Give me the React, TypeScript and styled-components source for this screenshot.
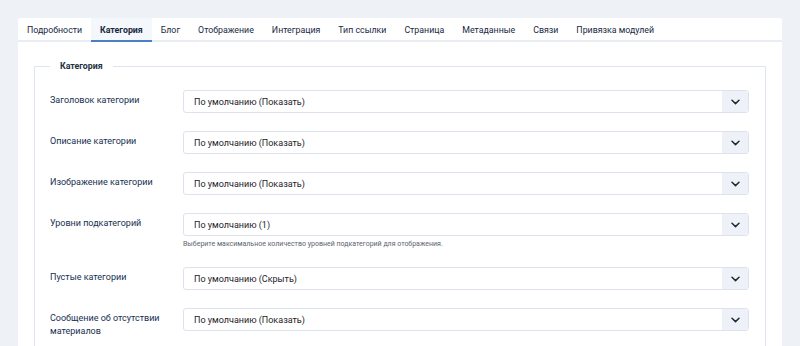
import styled, { createGlobalStyle } from "styled-components";

const GlobalStyle = createGlobalStyle`
    html, body {
        margin: 0;
        padding: 0;
        background-color: #eef2f7;
        font-family: Roboto, "Noto Sans", "Liberation Sans", sans-serif;
    }
`;

type Field = {
    label: string;
    value: string;
    hint?: string;
};

const tabs = [
    "Подробности",
    "Категория",
    "Блог",
    "Отображение",
    "Интеграция",
    "Тип ссылки",
    "Страница",
    "Метаданные",
    "Связи",
    "Привязка модулей",
];

const fields: Field[] = [
    { label: "Заголовок категории", value: "По умолчанию (Показать)" },
    { label: "Описание категории", value: "По умолчанию (Показать)" },
    { label: "Изображение категории", value: "По умолчанию (Показать)" },
    {
        label: "Уровни подкатегорий",
        value: "По умолчанию (1)",
        hint: "Выберите максимальное количество уровней подкатегорий для отображения.",
    },
    { label: "Пустые категории", value: "По умолчанию (Скрыть)" },
    { label: "Сообщение об отсутствии материалов", value: "По умолчанию (Показать)" },
];

const Chevron = () => (
    <svg width="9" height="6" viewBox="0 0 9 6" fill="none">
        <path d="M1 1.2l3.5 3.4 3.5-3.4" stroke="#1f2a37" strokeWidth="1.5" strokeLinecap="round" strokeLinejoin="round" />
    </svg>
);

export default function App() {
    return (
        <>
            <GlobalStyle />
            <Page>
                <Panel>
                    <TabBar>
                        {tabs.map((t, i) => (
                            <Tab key={t} active={i === 1}>{t}</Tab>
                        ))}
                    </TabBar>
                    <Body>
                        <Fieldset>
                            <Legend>Категория</Legend>
                            {fields.map((f) => (
                                <Row key={f.label}>
                                    <Label>{f.label}</Label>
                                    <Control>
                                        <Select>
                                            <SelectValue>{f.value}</SelectValue>
                                            <SelectButton><Chevron /></SelectButton>
                                        </Select>
                                        {f.hint && <Hint>{f.hint}</Hint>}
                                    </Control>
                                </Row>
                            ))}
                        </Fieldset>
                    </Body>
                </Panel>
            </Page>
        </>
    );
}

const Page = styled.div`
    padding: 18px 18px 0 18px;
    height: 346px;
    box-sizing: border-box;
    overflow: hidden;
`;

const Panel = styled.div`
    background-color: #ffffff;
    height: 100%;
    border-radius: 2px 2px 0 0;
`;

const TabBar = styled.div`
    display: flex;
    height: 22px;
    border-bottom: 2px solid #eaeef4;
    box-sizing: content-box;
`;

const Tab = styled.div<{ active?: boolean }>`
    display: flex;
    align-items: center;
    padding: 0 9px;
    height: 24px;
    margin-bottom: -2px;
    box-sizing: border-box;
    font-size: 8.8px;
    color: #18283f;
    font-weight: ${(p) => (p.active ? 700 : 400)};
    background-color: ${(p) => (p.active ? "#f4f7fb" : "transparent")};
    box-shadow: ${(p) => (p.active ? "inset 0 -2px 0 #4a7fc1" : "none")};
`;

const Body = styled.div`
    padding: 19px 16px 0 16px;
`;

const Fieldset = styled.fieldset`
    margin: 0;
    border: 1px solid #dfe5ee;
    border-bottom: none;
    padding: 18px 16px 0 15px;
    min-height: 300px;
`;

const Legend = styled.legend`
    font-size: 8.8px;
    line-height: 11px;
    font-weight: 700;
    color: #22303f;
    padding: 0 10px;
    margin-left: 0;
`;

const Row = styled.div`
    display: flex;
    align-items: flex-start;
    margin-bottom: 18px;
`;

const Label = styled.div`
    width: 133px;
    flex-shrink: 0;
    padding-top: 4px;
    padding-right: 10px;
    box-sizing: border-box;
    font-size: 9px;
    line-height: 13px;
    color: #16304f;
`;

const Control = styled.div`
    flex: 1;
    display: flex;
    flex-direction: column;
`;

const Select = styled.div`
    display: flex;
    height: 23px;
    box-sizing: border-box;
    border: 1px solid #dde3ec;
    border-radius: 3px;
    overflow: hidden;
    background-color: #ffffff;
`;

const SelectValue = styled.div`
    flex: 1;
    display: flex;
    align-items: center;
    padding-left: 10px;
    font-size: 9px;
    color: #1d2228;
`;

const SelectButton = styled.div`
    width: 26px;
    display: flex;
    align-items: center;
    justify-content: center;
    background-color: #eef2f8;
`;

const Hint = styled.div`
    margin-top: 3px;
    font-size: 7px;
    line-height: 10px;
    color: #5b6470;
`;
